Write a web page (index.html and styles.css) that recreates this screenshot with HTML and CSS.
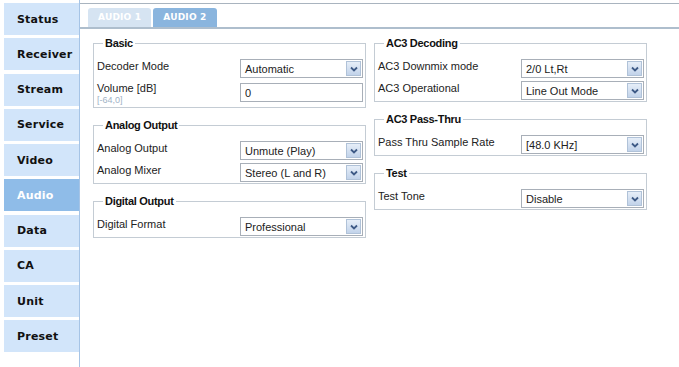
FILE: index.html
```html
<!DOCTYPE html>
<html lang="en">
<head>
  <meta charset="UTF-8" />
  <title>Audio</title>
  <link rel="stylesheet" href="styles.css">
</head>
<body>
  <div class="page">
    <!-- Left menu -->
    <div class="menu">
      <a class="menu-btn">Status</a>
      <a class="menu-btn">Receiver</a>
      <a class="menu-btn">Stream</a>
      <a class="menu-btn">Service</a>
      <a class="menu-btn">Video</a>
      <a class="menu-btn active">Audio</a>
      <a class="menu-btn">Data</a>
      <a class="menu-btn">CA</a>
      <a class="menu-btn">Unit</a>
      <a class="menu-btn">Preset</a>
    </div>

    <div class="main">
      <div class="tab-bar">
        <span class="tab">AUDIO 1</span>
        <span class="tab active">AUDIO 2</span>
      </div>

      <div class="columns">
        <div class="column">
          <fieldset>
            <legend>Basic</legend>
            <div class="row">
              <span class="label">Decoder Mode</span>
              <div class="select"><span>Automatic</span><span class="arrow"><svg width="8" height="6" viewBox="0 0 8 6"><path d="M1 1.5 L4 4.5 L7 1.5" /></svg></span></div>
            </div>
            <div class="row tall">
              <span class="label">Volume [dB]<small>[-64,0]</small></span>
              <input class="text-input" type="text" value="0" />
            </div>
          </fieldset>

          <fieldset>
            <legend>Analog Output</legend>
            <div class="row">
              <span class="label">Analog Output</span>
              <div class="select"><span>Unmute (Play)</span><span class="arrow"><svg width="8" height="6" viewBox="0 0 8 6"><path d="M1 1.5 L4 4.5 L7 1.5" /></svg></span></div>
            </div>
            <div class="row">
              <span class="label">Analog Mixer</span>
              <div class="select"><span>Stereo (L and R)</span><span class="arrow"><svg width="8" height="6" viewBox="0 0 8 6"><path d="M1 1.5 L4 4.5 L7 1.5" /></svg></span></div>
            </div>
          </fieldset>

          <fieldset>
            <legend>Digital Output</legend>
            <div class="row">
              <span class="label">Digital Format</span>
              <div class="select"><span>Professional</span><span class="arrow"><svg width="8" height="6" viewBox="0 0 8 6"><path d="M1 1.5 L4 4.5 L7 1.5" /></svg></span></div>
            </div>
          </fieldset>
        </div>

        <div class="column">
          <fieldset>
            <legend>AC3 Decoding</legend>
            <div class="row">
              <span class="label">AC3 Downmix mode</span>
              <div class="select"><span>2/0 Lt,Rt</span><span class="arrow"><svg width="8" height="6" viewBox="0 0 8 6"><path d="M1 1.5 L4 4.5 L7 1.5" /></svg></span></div>
            </div>
            <div class="row">
              <span class="label">AC3 Operational</span>
              <div class="select"><span>Line Out Mode</span><span class="arrow"><svg width="8" height="6" viewBox="0 0 8 6"><path d="M1 1.5 L4 4.5 L7 1.5" /></svg></span></div>
            </div>
          </fieldset>

          <fieldset>
            <legend>AC3 Pass-Thru</legend>
            <div class="row">
              <span class="label">Pass Thru Sample Rate</span>
              <div class="select"><span>[48.0 KHz]</span><span class="arrow"><svg width="8" height="6" viewBox="0 0 8 6"><path d="M1 1.5 L4 4.5 L7 1.5" /></svg></span></div>
            </div>
          </fieldset>

          <fieldset>
            <legend>Test</legend>
            <div class="row">
              <span class="label">Test Tone</span>
              <div class="select"><span>Disable</span><span class="arrow"><svg width="8" height="6" viewBox="0 0 8 6"><path d="M1 1.5 L4 4.5 L7 1.5" /></svg></span></div>
            </div>
          </fieldset>
        </div>
      </div>
    </div>
  </div>
</body>
</html>
```

FILE: styles.css
```css
body {
  margin: 0;
  background-color: #fff;
  font-family: "Liberation Sans", Arial, sans-serif;
  color: #222;
}

.page {
  display: flex;
  height: 367px;
}

/* left menu */
.menu {
  display: flex;
  flex-direction: column;
  gap: 3.25px;
  width: 75px;
  padding: 3px 0 0 4px;
}

.menu-btn {
  display: flex;
  align-items: center;
  height: 32px;
  padding-left: 13px;
  background-color: #d2e5fa;
  color: #111;
  font-family: "DejaVu Sans", Verdana, sans-serif;
  font-weight: bold;
  font-size: 11px;
  letter-spacing: 0.2px;
}

.menu-btn.active {
  background-color: #8fbce8;
  color: #fff;
}

/* main panel */
.main {
  flex: 1;
  border-left: 1px solid #a6c4e6;
  padding-top: 3px;
}

.tab-bar {
  display: flex;
  align-items: flex-end;
  gap: 2px;
  height: 23px;
  padding-left: 8px;
  border-top: 1px solid #a9b4bf;
  border-bottom: 2px solid #aebecd;
}

.tab {
  height: 19px;
  line-height: 19px;
  padding: 0 10px;
  border-radius: 3px 3px 0 0;
  background-color: #d6e4f2;
  color: #fff;
  font-family: "DejaVu Sans", Verdana, sans-serif;
  font-weight: bold;
  font-size: 9px;
  letter-spacing: 0.2px;
}

.tab.active {
  background-color: #8ab5de;
}

.columns {
  display: flex;
  gap: 8px;
  padding: 8px 0 0 13px;
}

.column {
  display: flex;
  flex-direction: column;
  gap: 11px;
  width: 273px;
}

fieldset {
  margin: 0;
  padding: 8px 2px 0 3px;
  border: 1px solid #c4ccd4;
}

legend {
  margin-left: 6px;
  padding: 0 2px;
  font-size: 11px;
  line-height: 12px;
  font-weight: bold;
  letter-spacing: -0.3px;
  color: #111;
}

.row {
  display: flex;
  justify-content: space-between;
  align-items: flex-start;
  height: 22px;
}

.row.tall {
  height: 28px;
}

.label {
  display: flex;
  flex-direction: column;
  padding-top: 3px;
  font-size: 11px;
  line-height: 13px;
}

.label small {
  font-size: 9px;
  line-height: 10px;
  color: #9fb2c6;
}

.select {
  display: flex;
  align-items: center;
  justify-content: space-between;
  box-sizing: border-box;
  width: 123px;
  height: 19px;
  margin-top: 2px;
  padding-left: 4px;
  border: 1px solid #a8afb8;
  background-color: #fff;
  font-size: 11px;
}

.arrow {
  display: flex;
  align-items: center;
  justify-content: center;
  box-sizing: border-box;
  width: 15px;
  height: 15px;
  margin-right: 1px;
  border: 1px solid #b0c2d8;
  background: linear-gradient(#e6eef8, #c2d3ea);
}

.arrow path {
  fill: none;
  stroke: #3e5a86;
  stroke-width: 1.8;
}

.text-input {
  box-sizing: border-box;
  width: 123px;
  height: 19px;
  margin: 4px 0 0;
  padding: 0 4px;
  border: 1px solid #a8afb8;
  font-family: "Liberation Sans", Arial, sans-serif;
  font-size: 11px;
  color: #222;
}
```
